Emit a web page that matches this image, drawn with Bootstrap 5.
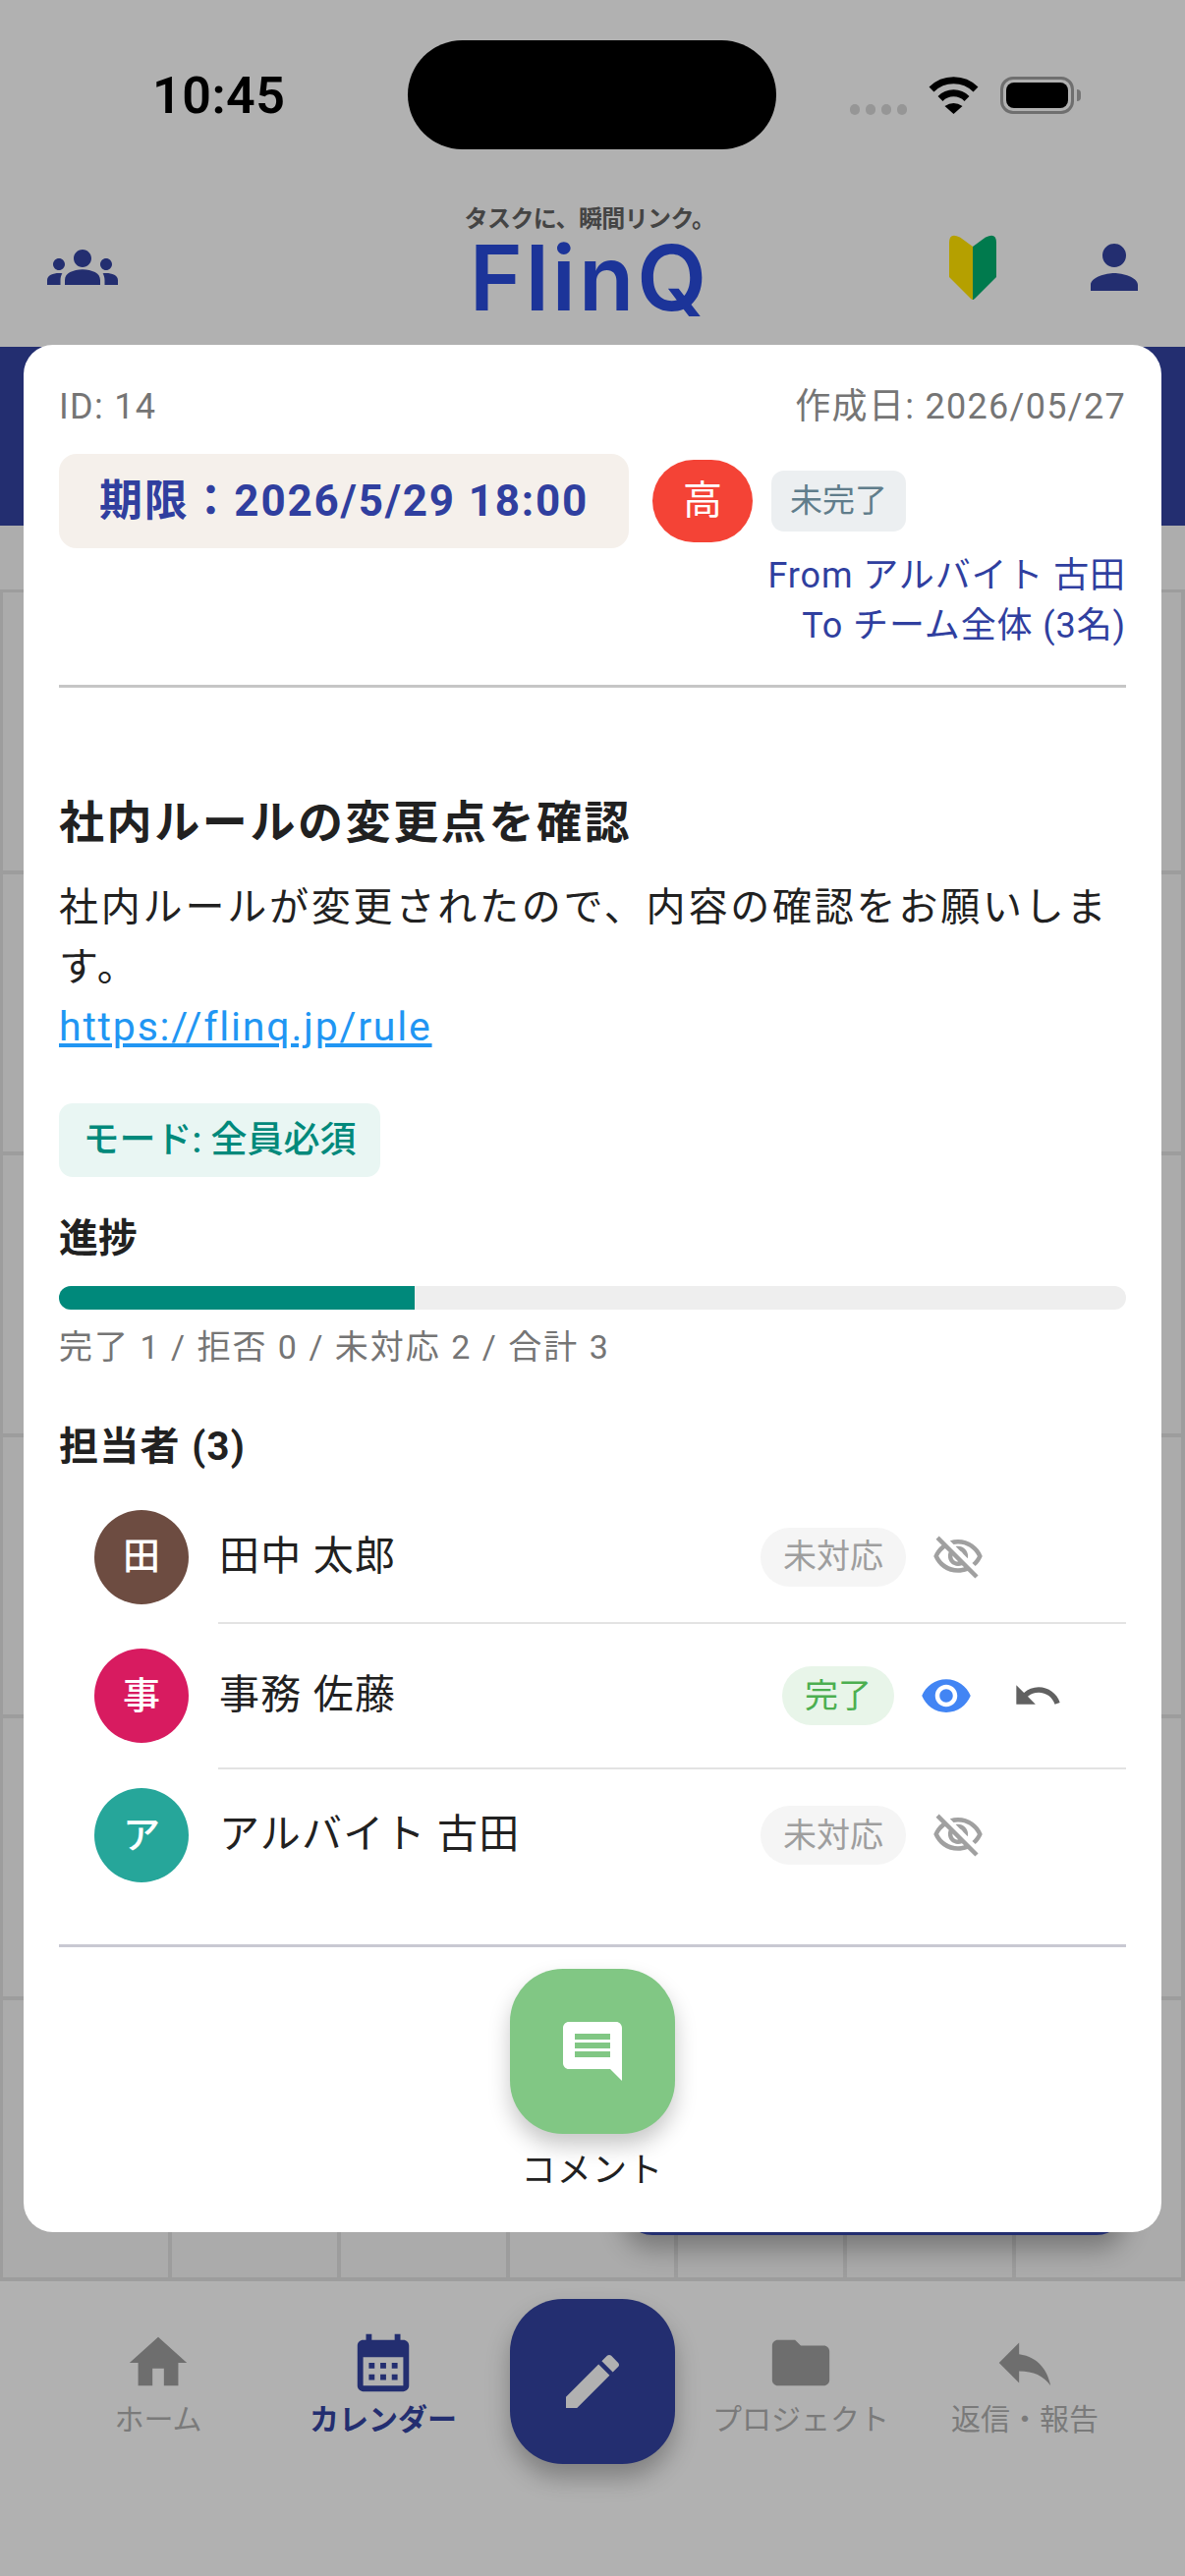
<!DOCTYPE html>
<html lang="ja">
<head>
<meta charset="UTF-8" />
<meta name="viewport" content="width=device-width, initial-scale=1" />
<title>FlinQ</title>
<link href="https://cdn.jsdelivr.net/npm/bootstrap@5.3.0/dist/css/bootstrap.min.css" rel="stylesheet" />
<style>
  body { margin: 0; background: #b1b1b1; font-family: Roboto, "Noto Sans CJK JP", sans-serif; color: #212121; overflow: hidden; }
  .phone { position: relative; width: 1206px; height: 2622px; overflow: hidden; background: #b1b1b1; }

  .status-area { height: 190px; position: relative; }
  .clock { padding: 66px 0 0 155px; font: 600 52px/64px Roboto, sans-serif; color: #000; letter-spacing: .5px; }
  .island { position: absolute; left: 415px; top: 41px; width: 375px; height: 111px; border-radius: 56px; background: #000; }
  .status-icons { position: absolute; left: 865px; top: 78px; gap: 22px; height: 38px; }
  .cell-dots { gap: 6px; padding-top: 28px; }
  .cell-dots i { display: block; width: 10px; height: 11px; border-radius: 5px; background: #969696; }
  .batt { width: 75px; height: 38px; border: 3px solid #6f6f6f; border-radius: 13px; padding: 3px; position: relative; }
  .batt i { display: block; height: 100%; background: #000; border-radius: 8px; }
  .batt::after { content: ""; position: absolute; right: -10px; top: 10px; width: 4px; height: 12px; background: #757575; border-radius: 0 4px 4px 0; }

  .app-bar { height: 163px; position: relative; padding: 0 36px 0 48px; }
  .tagline { font-size: 24px; line-height: 26px; font-weight: 700; color: #444; letter-spacing: -.6px; }
  .logo-name { margin-top: 5px; font: 600 92px/84px Inter, sans-serif; color: #1c3499; letter-spacing: 3px; }
  .logo-box { position: absolute; left: 440px; top: 20px; width: 320px; text-align: center; }
  .bar-icons { gap: 84px; }

  .blue-band { height: 182px; background: #232e70; }
  .week-band { height: 65px; background: #adadad; }
  .cal-grid { display: grid; grid-template-columns: repeat(7, 1fr); grid-auto-rows: 286.5px; background: #ababab; border-top: 3px solid #9d9d9d; border-left: 3px solid #9d9d9d; }
  .cal-cell { border-right: 4px solid #9d9d9d; border-bottom: 4px solid #9d9d9d; }

  .bottom-nav { position: absolute; left: 0; right: 0; top: 2322px; height: 300px; background: #b1b1b1; }
  .nav-item { position: absolute; top: 48px; width: 220px; text-align: center; font-size: 30px; line-height: 40px; color: #7a7a7a; }
  .nav-item svg { display: block; margin: 0 auto 3px; }
  .nav-item.on { color: #232e70; font-weight: 700; }
  .fab-pen { position: absolute; left: 519px; top: 2340px; width: 168px; height: 168px; border-radius: 54px; background: #232e70; box-shadow: 0 14px 24px rgba(0,0,0,.28); }
  .peek-btn { position: absolute; left: 634px; top: 2175px; width: 512px; height: 100px; border-radius: 30px; background: #232e70; box-shadow: 0 14px 26px rgba(0,0,0,.3); }

  .sheet { position: absolute; left: 24px; top: 351px; width: 1158px; height: 1921px; background: #fff; border-radius: 30px; padding: 41px 36px 0; }
  .meta-row { font-size: 36px; line-height: 44px; color: #757575; letter-spacing: 1.3px; }
  .due-row { margin-top: 26px; height: 96px; }
  .due-box { width: 580px; height: 96px; border-radius: 18px; background: #f5f0eb; color: #303f9f; font-size: 44px; font-weight: 700; letter-spacing: 1.8px; }
  .prio { width: 102px; height: 84px; margin-left: 24px; border-radius: 42px; background: #f44336; color: #fff; font-size: 40px; }
  .state-chip { width: 137px; height: 62px; margin-left: 19px; border-radius: 13px; background: #eceff1; color: #607d8b; font-size: 33px; }
  .who { padding-top: 3px; font-size: 36px; line-height: 51px; color: #303f9f; letter-spacing: .9px; }
  .sep { height: 3px; background: #c6c6c6; border: 0; margin: 0; opacity: 1; }
  .sep-top { margin-top: 34px; }
  .task-title { margin: 107px 0 0; font-size: 46px; line-height: 60px; font-weight: 700; letter-spacing: 2.6px; color: #212121; }
  .task-body { margin-top: 26px; font-size: 40px; line-height: 61px; letter-spacing: 2.8px; color: #212121; }
  .task-body a { color: #2196f3; font-size: 41px; letter-spacing: 1.8px; }
  .mode-chip { margin-top: 47px; width: 327px; height: 75px; border-radius: 14px; background: #e9f6f3; color: #00897b; font-size: 37px; font-weight: 500; }
  .sec-head { font-size: 40px; line-height: 50px; font-weight: 700; color: #212121; }
  .mt-prog { margin-top: 38px; }
  .mt-staff { margin-top: 55px; letter-spacing: 1.3px; }
  .prog { margin-top: 23px; height: 24px; border-radius: 12px; background: #eee; }
  .prog .progress-bar { background: #00897b; }
  .prog-note { margin-top: 16px; font-size: 34px; line-height: 44px; color: #757575; letter-spacing: 2px; }

  .person { padding-left: 36px; }
  .person-a { height: 133px; margin-top: 20px; padding-right: 144px; }
  .person-b { height: 146px; padding-right: 64px; }
  .person-c { height: 134px; padding-right: 144px; }
  .avatar { width: 96px; height: 96px; flex: none; color: #fff; font-size: 38px; font-weight: 500; }
  .av-brown { background: #6d4c41; }
  .av-pink { background: #d81b60; }
  .av-teal { background: #26a69a; }
  .person-name { margin-left: 31px; font-size: 41px; letter-spacing: 1.2px; color: #212121; }
  .st-pill { height: 60px; padding: 0 23px; font-size: 34px; }
  .st-none { background: #f5f5f5; color: #9e9e9e; }
  .st-done { background: #e8f5e9; color: #4caf50; }
  .person svg { flex: none; }
  .row-line { height: 2px; margin-left: 162px; background: #e3e3e3; }
  .ms-eye { margin-left: 26px; }
  .ml-undo { margin-left: 40px; }

  .sep-bottom { margin-top: 44px; background: #c9c9d2; }
  .comment-wrap { margin-top: 22px; }
  .fab-comment { width: 168px; height: 168px; border-radius: 54px; background: #81c784; box-shadow: 0 12px 22px rgba(0,0,0,.22); border: 0; }
  .comment-label { margin-top: 16px; font-size: 35px; line-height: 44px; letter-spacing: 1.2px; color: #212121; }
</style>
</head>
<body>
<div class="phone">

  <div class="status-area">
    <div class="clock">10:45</div>
    <div class="island"></div>
    <div class="status-icons d-flex">
      <div class="cell-dots d-flex"><i></i><i></i><i></i><i></i></div>
      <svg width="51" height="38" viewBox="0 0 51 38" fill="none" stroke="#000" stroke-width="7"><path d="M3 13 A 32 32 0 0 1 48 13" /><path d="M12 22.5 A 19 19 0 0 1 39 22.5" /><path d="M16.5 30 Q25.5 24 34.5 30 L25.5 38z" fill="#000" stroke="none" /></svg>
      <div class="batt"><i></i></div>
    </div>
  </div>

  <div class="app-bar d-flex align-items-center justify-content-between">
    <svg width="72" height="72" viewBox="0 0 24 24" fill="#232e70"><path d="M12 12.75c1.63 0 3.07.39 4.24.9 1.08.48 1.76 1.56 1.76 2.73V18H6v-1.61c0-1.18.68-2.26 1.76-2.73 1.17-.52 2.61-.91 4.24-.91zM4 13c1.1 0 2-.9 2-2s-.9-2-2-2-2 .9-2 2 .9 2 2 2zm1.13 1.1c-.37-.06-.74-.1-1.13-.1-.99 0-1.93.21-2.78.58C.48 14.9 0 15.62 0 16.43V18h4.5v-1.61c0-.83.23-1.61.63-2.29zM20 13c1.1 0 2-.9 2-2s-.9-2-2-2-2 .9-2 2 .9 2 2 2zm4 3.43c0-.81-.48-1.53-1.22-1.85-.85-.37-1.79-.58-2.78-.58-.39 0-.76.04-1.13.1.4.68.63 1.46.63 2.29V18H24v-1.57zM12 6c1.66 0 3 1.34 3 3s-1.34 3-3 3-3-1.34-3-3 1.34-3 3-3z"/></svg>
    <div class="logo-box">
      <div class="tagline">タスクに、瞬間リンク。</div>
      <div class="logo-name">FlinQ</div>
    </div>
    <div class="bar-icons d-flex align-items-center">
      <svg width="48" height="66" viewBox="0 0 48 66"><path d="M24 12 L11 2.5 Q0 -3 0 8 V43 L20 63 Q24 67 24 66z" fill="#b5a000"/><path d="M24 12 L37 2.5 Q48 -3 48 8 V43 L28 63 Q24 67 24 66z" fill="#007a4d"/></svg>
      <svg width="72" height="72" viewBox="0 0 24 24" fill="#232e70"><path d="M12 12c2.21 0 4-1.79 4-4s-1.79-4-4-4-4 1.79-4 4 1.79 4 4 4zm0 2c-2.67 0-8 1.34-8 4v2h16v-2c0-2.66-5.33-4-8-4z"/></svg>
    </div>
  </div>

  <div class="blue-band"></div>
  <div class="week-band"></div>
  <div class="cal-grid" id="calGrid"></div>

  <div class="peek-btn"></div>

  <div class="bottom-nav">
    <div class="nav-item" style="left:51px">
      <svg width="70" height="70" viewBox="0 0 24 24" fill="#6e6e6e"><path d="M10 20v-6h4v6h5v-8h3L12 3 2 12h3v8z"/></svg>ホーム
    </div>
    <div class="nav-item on" style="left:280px">
      <svg width="70" height="70" viewBox="0 0 24 24" fill="#232e70"><path d="M19 4h-1V2h-2v2H8V2H6v2H5c-1.11 0-1.99.9-1.99 2L3 20c0 1.1.89 2 2 2h14c1.1 0 2-.9 2-2V6c0-1.1-.9-2-2-2zm0 16H5V10h14v10zM9 14H7v-2h2v2zm4 0h-2v-2h2v2zm4 0h-2v-2h2v2zm-8 4H7v-2h2v2zm4 0h-2v-2h2v2zm4 0h-2v-2h2v2z"/></svg>カレンダー
    </div>
    <div class="nav-item" style="left:705px">
      <svg width="70" height="70" viewBox="0 0 24 24" fill="#6e6e6e"><path d="M10 4H4c-1.1 0-1.99.9-1.99 2L2 18c0 1.1.9 2 2 2h16c1.1 0 2-.9 2-2V8c0-1.1-.9-2-2-2h-8l-2-2z"/></svg>プロジェクト
    </div>
    <div class="nav-item" style="left:933px">
      <svg width="70" height="70" viewBox="0 0 24 24" fill="#6e6e6e"><path d="M10 9V5l-7 7 7 7v-4.1c5 0 8.5 1.6 11 5.1-1-5-4-10-11-11z"/></svg>返信・報告
    </div>
  </div>
  <div class="fab-pen d-flex align-items-center justify-content-center">
    <svg width="72" height="72" viewBox="0 0 24 24" fill="#b1b1b1"><path d="M3 17.25V21h3.75L17.81 9.94l-3.75-3.75L3 17.25zM20.71 7.04c.39-.39.39-1.02 0-1.41l-2.34-2.34c-.39-.39-1.02-.39-1.41 0l-1.83 1.83 3.75 3.75 1.83-1.83z"/></svg>
  </div>

  <div class="sheet">
    <div class="meta-row d-flex justify-content-between">
      <span>ID: 14</span>
      <span>作成日: 2026/05/27</span>
    </div>
    <div class="due-row d-flex align-items-center">
      <div class="due-box d-flex align-items-center justify-content-center">期限：2026/5/29 18:00</div>
      <div class="prio d-flex align-items-center justify-content-center">高</div>
      <div class="state-chip d-flex align-items-center justify-content-center">未完了</div>
    </div>
    <div class="who text-end">From アルバイト 古田<br />To チーム全体 (3名)</div>
    <hr class="sep sep-top" />

    <h2 class="task-title">社内ルールの変更点を確認</h2>
    <div class="task-body">社内ルールが変更されたので、内容の確認をお願いします。<br /><a href="#">https://flinq.jp/rule</a></div>

    <div class="mode-chip d-flex align-items-center justify-content-center">モード: 全員必須</div>

    <div class="sec-head mt-prog">進捗</div>
    <div class="progress prog">
      <div class="progress-bar" style="width:33.33%"></div>
    </div>
    <div class="prog-note">完了 1 / 拒否 0 / 未対応 2 / 合計 3</div>

    <div class="sec-head mt-staff">担当者 (3)</div>

    <div class="person person-a d-flex align-items-center">
      <div class="avatar av-brown rounded-circle d-flex align-items-center justify-content-center">田</div>
      <div class="person-name flex-grow-1">田中 太郎</div>
      <div class="st-pill st-none rounded-pill d-flex align-items-center">未対応</div>
      <svg class="ms-eye" width="54" height="54" viewBox="0 0 24 24" fill="#a0a0a0"><path d="M12 6c3.79 0 7.17 2.13 8.82 5.5-.59 1.22-1.42 2.27-2.41 3.12l1.41 1.41c1.39-1.23 2.49-2.77 3.18-4.53C21.27 7.11 17 4 12 4c-1.27 0-2.49.2-3.64.57l1.65 1.65C10.66 6.09 11.32 6 12 6zm-1.07 1.14L13 9.21c.57.25 1.03.71 1.28 1.28l2.07 2.07c.08-.34.14-.7.14-1.07C16.5 9.01 14.48 7 12 7c-.37 0-.72.05-1.07.14zM2.01 3.87l2.68 2.68C3.06 7.83 1.77 9.53 1 11.5 2.73 15.89 7 19 12 19c1.52 0 2.98-.29 4.32-.82l3.42 3.42 1.41-1.41L3.42 2.45 2.01 3.87zm7.5 7.5l2.61 2.61c-.04.01-.08.02-.12.02-1.38 0-2.5-1.12-2.5-2.5 0-.05.01-.08.01-.13zm-3.4-3.4l1.75 1.75c-.23.55-.36 1.15-.36 1.77 0 2.48 2.02 4.5 4.5 4.5.62 0 1.22-.13 1.76-.36l.98.98c-.88.24-1.8.38-2.74.38-3.79 0-7.17-2.13-8.82-5.5.7-1.43 1.72-2.61 2.93-3.52z"/></svg>
    </div>
    <div class="row-line"></div>
    <div class="person person-b d-flex align-items-center">
      <div class="avatar av-pink rounded-circle d-flex align-items-center justify-content-center">事</div>
      <div class="person-name flex-grow-1">事務 佐藤</div>
      <div class="st-pill st-done rounded-pill d-flex align-items-center">完了</div>
      <svg class="ms-eye" width="54" height="54" viewBox="0 0 24 24" fill="#4285f4"><path d="M12 4.5C7 4.5 2.73 7.61 1 12c1.73 4.39 6 7.5 11 7.5s9.27-3.11 11-7.5c-1.73-4.39-6-7.5-11-7.5zM12 17c-2.76 0-5-2.24-5-5s2.24-5 5-5 5 2.24 5 5-2.24 5-5 5zm0-8c-1.66 0-3 1.34-3 3s1.34 3 3 3 3-1.34 3-3-1.34-3-3-3z"/></svg>
      <svg class="ml-undo" width="52" height="52" viewBox="0 0 24 24" fill="#616161"><path d="M12.5 8c-2.65 0-5.05.99-6.9 2.6L2 7v9h9l-3.62-3.62c1.39-1.16 3.16-1.88 5.12-1.88 3.54 0 6.55 2.31 7.6 5.5l2.37-.78C21.08 11.03 17.15 8 12.5 8z"/></svg>
    </div>
    <div class="row-line"></div>
    <div class="person person-c d-flex align-items-center">
      <div class="avatar av-teal rounded-circle d-flex align-items-center justify-content-center">ア</div>
      <div class="person-name flex-grow-1">アルバイト 古田</div>
      <div class="st-pill st-none rounded-pill d-flex align-items-center">未対応</div>
      <svg class="ms-eye" width="54" height="54" viewBox="0 0 24 24" fill="#a0a0a0"><path d="M12 6c3.79 0 7.17 2.13 8.82 5.5-.59 1.22-1.42 2.27-2.41 3.12l1.41 1.41c1.39-1.23 2.49-2.77 3.18-4.53C21.27 7.11 17 4 12 4c-1.27 0-2.49.2-3.64.57l1.65 1.65C10.66 6.09 11.32 6 12 6zm-1.07 1.14L13 9.21c.57.25 1.03.71 1.28 1.28l2.07 2.07c.08-.34.14-.7.14-1.07C16.5 9.01 14.48 7 12 7c-.37 0-.72.05-1.07.14zM2.01 3.87l2.68 2.68C3.06 7.83 1.77 9.53 1 11.5 2.73 15.89 7 19 12 19c1.52 0 2.98-.29 4.32-.82l3.42 3.42 1.41-1.41L3.42 2.45 2.01 3.87zm7.5 7.5l2.61 2.61c-.04.01-.08.02-.12.02-1.38 0-2.5-1.12-2.5-2.5 0-.05.01-.08.01-.13zm-3.4-3.4l1.75 1.75c-.23.55-.36 1.15-.36 1.77 0 2.48 2.02 4.5 4.5 4.5.62 0 1.22-.13 1.76-.36l.98.98c-.88.24-1.8.38-2.74.38-3.79 0-7.17-2.13-8.82-5.5.7-1.43 1.72-2.61 2.93-3.52z"/></svg>
    </div>

    <hr class="sep sep-bottom" />
    <div class="comment-wrap d-flex flex-column align-items-center">
      <button type="button" class="fab-comment d-flex align-items-center justify-content-center">
        <svg width="72" height="72" viewBox="0 0 24 24" fill="#fff"><path d="M21.99 4c0-1.1-.89-2-1.99-2H4c-1.1 0-2 .9-2 2v12c0 1.1.9 2 2 2h14l4 4-.01-18zM18 14H6v-2h12v2zm0-3H6V9h12v2zm0-3H6V6h12v2z"/></svg>
      </button>
      <div class="comment-label">コメント</div>
    </div>
  </div>
</div>

<script>
  // calendar cells behind the sheet
  const grid = document.getElementById("calGrid");
  for (let i = 0; i < 42; i++) {
    const c = document.createElement("div");
    c.className = "cal-cell";
    grid.appendChild(c);
  }
</script>
<script src="https://cdn.jsdelivr.net/npm/bootstrap@5.3.0/dist/js/bootstrap.bundle.min.js"></script>
</body>
</html>
